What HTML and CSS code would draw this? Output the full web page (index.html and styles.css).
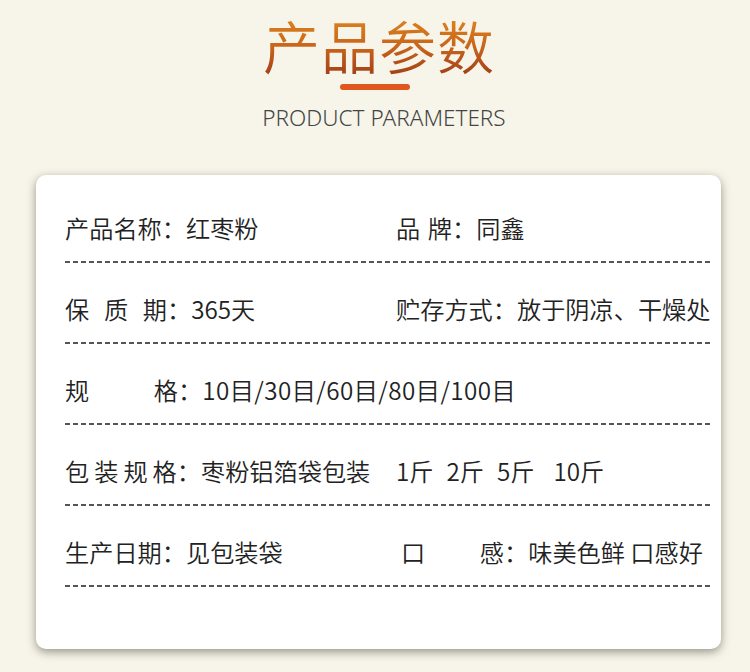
FILE: index.html
```html
<!DOCTYPE html>
<html lang="zh">
<head>
<meta charset="utf-8">
<link rel="stylesheet" href="styles.css">
</head>
<body>
<div class="page">
  <header class="head">
    <h1 class="title">产品参数</h1>
    <div class="bar"></div>
    <p class="subtitle">PRODUCT PARAMETERS</p>
  </header>
  <section class="card">
    <div class="row">
      <div class="line">
        <div class="col"><span class="lbl">产品名称</span>：红枣粉</div>
        <div class="col col-right"><span class="lbl lbl-brand"><span>品</span><span>牌</span></span>：同鑫</div>
      </div>
      <div class="dash"></div>
    </div>
    <div class="row">
      <div class="line">
        <div class="col"><span class="lbl lbl-shelf"><span>保</span><span>质</span><span>期</span></span>：365天</div>
        <div class="col col-right"><span class="lbl">贮存方式</span>：放于阴凉、干燥处</div>
      </div>
      <div class="dash"></div>
    </div>
    <div class="row">
      <div class="line">
        <div class="col col-wide"><span class="lbl lbl-spec"><span>规</span><span>格</span></span>：<span class="spread">10目/30目/60目/80目/100目</span></div>
      </div>
      <div class="dash"></div>
    </div>
    <div class="row">
      <div class="line">
        <div class="col"><span class="lbl lbl-pack">包装规格</span>：枣粉铝箔袋包装</div>
        <div class="col col-right weights"><span>1斤</span><span>2斤</span><span>5斤</span><span class="w-last">10斤</span></div>
      </div>
      <div class="dash"></div>
    </div>
    <div class="row">
      <div class="line">
        <div class="col"><span class="lbl">生产日期</span>：见包装袋</div>
        <div class="col col-right"><span class="lbl lbl-taste"><span>口</span><span>感</span></span>：味美色鲜 口感好</div>
      </div>
      <div class="dash"></div>
    </div>
  </section>
</div>
</body>
</html>
```
FILE: styles.css
```css
html, body {
  margin: 0;
  padding: 0;
}
body {
  background: #f7f5ea;
  font-family: "Noto Sans CJK SC", "Noto Sans", sans-serif;
  color: #222;
}
.page {
  width: 750px;
  height: 672px;
  overflow: hidden;
  display: flex;
  flex-direction: column;
  align-items: center;
}
.head {
  display: flex;
  flex-direction: column;
  align-items: center;
  padding-top: 8px;
}
.title {
  margin: 0 0 0 8px;
  font-size: 57px;
  font-weight: 350;
  line-height: 72px;
  letter-spacing: 1px;
  background: linear-gradient(180deg, #e38c1d 0%, #c8641b 55%, #9c3a17 100%);
  -webkit-background-clip: text;
  background-clip: text;
  color: transparent;
}
.bar {
  width: 70px;
  height: 6px;
  border-radius: 3px;
  background: #e0561f;
  margin-top: 4px;
}
.subtitle {
  margin: 12px 0 0 18px;
  font-family: "Noto Sans", sans-serif;
  font-weight: 300;
  font-size: 22.5px;
  line-height: 32px;
  color: #454545;
  letter-spacing: 0;
}
.card {
  align-self: flex-start;
  margin-top: 41px;
  margin-left: 36px;
  width: 685px;
  height: 474px;
  box-sizing: border-box;
  background: #fff;
  border-radius: 10px;
  box-shadow: 0 3px 10px rgba(70, 70, 50, 0.55);
  padding: 38px 0 0 29px;
}
.row {
  display: flex;
  flex-direction: column;
  margin-bottom: 31px;
}
.line {
  display: flex;
  height: 30px;
  line-height: 30px;
  font-size: 24.2px;
  font-weight: 350;
  white-space: nowrap;
}
.col {
  flex: none;
  width: 331px;
  display: flex;
}
.col-right {
  flex: 1 1 auto;
  width: auto;
}
.col-wide {
  width: auto;
}
.spread {
  letter-spacing: 0.45px;
}
.lbl {
  display: inline-flex;
  justify-content: space-between;
}
.lbl-brand { width: 56px; }
.lbl-shelf { width: 102px; }
.lbl-spec { width: 113px; }
.lbl-pack { letter-spacing: 5px; margin-right: -5px; }
.lbl-taste { width: 108px; padding-left: 5px; box-sizing: border-box; }
.weights {
  gap: 13px;
}
.weights .w-last {
  margin-left: 6px;
}
.dash {
  margin-top: 18px;
  width: 648px;
  height: 2px;
  background: repeating-linear-gradient(90deg, #555 0 5px, transparent 5px 8px);
}
```
